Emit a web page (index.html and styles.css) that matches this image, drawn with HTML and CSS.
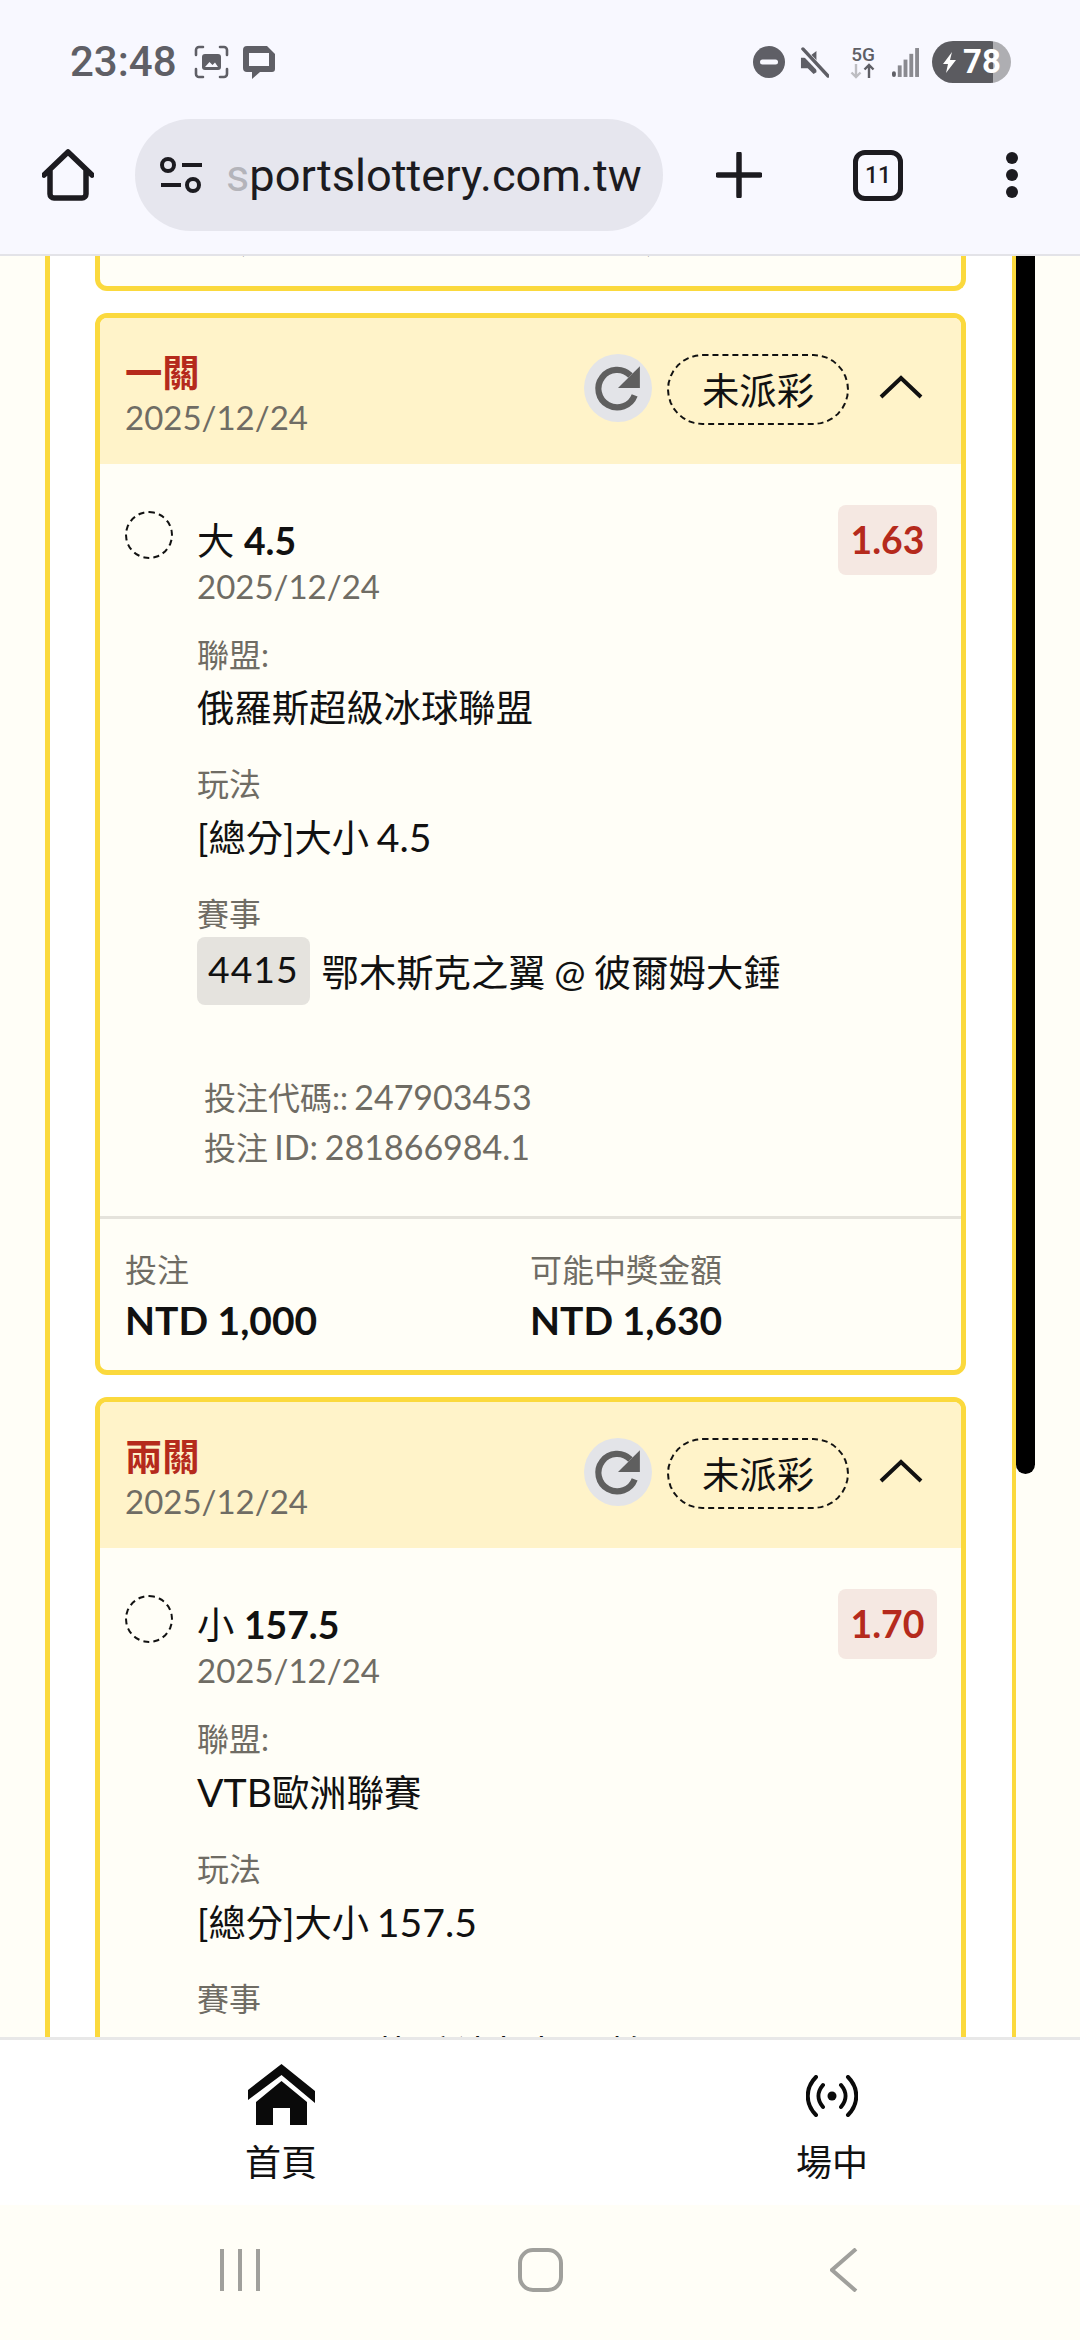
FILE: index.html
```html
<!DOCTYPE html>
<html>
<head>
    <meta charset="utf-8" />
    <meta name="viewport" content="width=device-width, initial-scale=1.0" />
    <title>sportslottery.com.tw</title>
    <link rel="stylesheet" href="styles.css">
</head>
<body>
    <header class="browser">
        <div class="status">
            <span class="time">23:48</span>
            <svg class="status-icon shot" viewBox="0 0 35 34"><path d="M2 10V5a3 3 0 0 1 3-3h4M26 2h4a3 3 0 0 1 3 3v5M33 24v5a3 3 0 0 1-3 3h-4M9 32H5a3 3 0 0 1-3-3v-5" fill="none" stroke="#5f5f66" stroke-width="2.6" stroke-linecap="round"/><rect x="8" y="9" width="19" height="16" rx="3" fill="#5f5f66"/><path d="M11 22l4.500-5 3 3 2.500-2.500 3 4.500z" fill="#f8f8ff"/></svg>
            <svg class="status-icon msg" viewBox="0 0 32 33"><path d="M4 0h20l8 8v15a3 3 0 0 1-3 3H17l-8 7v-7H4a4 4 0 0 1-4-4V4a4 4 0 0 1 4-4z" fill="#5f5f66"/><rect x="6" y="7" width="20" height="13" fill="#f8f8ff"/></svg>
            <div class="status-right">
                <svg class="status-icon dnd" viewBox="0 0 32 32"><circle cx="16" cy="16" r="16" fill="#5f5f66"/><rect x="7" y="13.500" width="18" height="5" rx="2.500" fill="#f8f8ff"/></svg>
                <svg class="status-icon mute" viewBox="0 0 30 32"><path d="M1 11h7l9-7v22l-3 2-6-6H1z" fill="#5f5f66"/><path d="M2 3l26 27" stroke="#f8f8ff" stroke-width="7"/><path d="M3 2l26 28" stroke="#5f5f66" stroke-width="3.500" stroke-linecap="round"/></svg>
                <div class="net">
                    <span class="net-label">5G</span>
                    <svg viewBox="0 0 26 16"><path d="M6 1v13M1.500 9.500L6 14l4.500-4.500" fill="none" stroke="#bdbdc2" stroke-width="2.400"/><path d="M19 15V2M14.500 6.500L19 2l4.500 4.500" fill="none" stroke="#5f5f66" stroke-width="2.400"/></svg>
                </div>
                <svg class="status-icon signal" viewBox="0 0 28 30"><rect x="0" y="24" width="4" height="6" rx="2" fill="#5f5f66"/><rect x="6" y="18" width="4" height="12" fill="#8a8a90"/><rect x="12" y="12" width="4" height="18" fill="#8a8a90"/><rect x="18" y="6" width="4" height="24" fill="#8a8a90"/><rect x="24" y="0" width="4" height="30" fill="#8a8a90"/></svg>
                <div class="battery">
                    <svg viewBox="0 0 15 21"><path d="M10 0L1 12h5l-2 9 10-13H8z" fill="#fff"/></svg>
                    <span>78</span>
                </div>
            </div>
        </div>
        <div class="toolbar">
            <svg class="home-icon" viewBox="0 0 52 52"><path d="M2 26L26 3l24 23M8 21v24a4 4 0 0 0 4 4h28a4 4 0 0 0 4-4V21" fill="none" stroke="#1c1b20" stroke-width="5.500" stroke-linecap="round" stroke-linejoin="round"/></svg>
            <div class="url-pill">
                <svg class="tune-icon" viewBox="0 0 42 36"><circle cx="8" cy="8" r="6" fill="none" stroke="#1c1b20" stroke-width="4"/><path d="M22 8h20M1 28h20" stroke="#1c1b20" stroke-width="4"/><circle cx="33" cy="28" r="6" fill="none" stroke="#1c1b20" stroke-width="4"/></svg>
                <span class="url"><span class="url-fade">s</span>portslottery.com.tw</span>
            </div>
            <svg class="plus-icon" viewBox="0 0 46 46"><path d="M23 2v42M2 23h42" stroke="#1c1b20" stroke-width="5.500" stroke-linecap="round"/></svg>
            <div class="tabs">11</div>
            <svg class="more-icon" viewBox="0 0 12 46"><circle cx="6" cy="6" r="6" fill="#1c1b20"/><circle cx="6" cy="23" r="6" fill="#1c1b20"/><circle cx="6" cy="40" r="6" fill="#1c1b20"/></svg>
        </div>
    </header>

    <main class="content">
        <div class="frame">
            <div class="card card-stub">
                <div class="foot foot-clipped">
                    <div class="foot-col"><div class="amount">NTD 1,000</div></div>
                    <div class="foot-col"><div class="amount">NTD 1,630</div></div>
                </div>
            </div>

            <div class="card">
                <div class="card-head">
                    <div class="head-text">
                        <div class="parlay">一關</div>
                        <div class="date">2025/12/24</div>
                    </div>
                    <div class="refresh">
                        <svg viewBox="0 0 48 48"><path d="M40 31a18 18 0 1 1-4-19" fill="none" stroke="#5f5f5f" stroke-width="6"/><path d="M45 3v21H24z" fill="#5f5f5f"/></svg>
                    </div>
                    <div class="state">未派彩</div>
                    <svg class="chevron" viewBox="0 0 44 24"><path d="M2 22L22 3l20 19" fill="none" stroke="#111" stroke-width="4"/></svg>
                </div>
                <div class="selection">
                    <div class="radio"></div>
                    <div class="selection-main">
                        <div class="pick">大 <b>4.5</b></div>
                        <div class="date pick-date">2025/12/24</div>
                        <div class="label first">聯盟:</div>
                        <div class="value">俄羅斯超級冰球聯盟</div>
                        <div class="label">玩法</div>
                        <div class="value">[總分]大小 <span class="num">4.5</span></div>
                        <div class="label">賽事</div>
                        <div class="match">
                            <span class="chip">4415</span>
                            <span class="teams">鄂木斯克之翼 @ 彼爾姆大錘</span>
                        </div>
                        <div class="info">
                            <div>投注代碼:: <span class="num">247903453</span></div>
                            <div>投注 <span class="num">ID: 281866984.1</span></div>
                        </div>
                    </div>
                    <div class="odds">1.63</div>
                </div>
                <div class="foot">
                    <div class="foot-col">
                        <div class="label">投注</div>
                        <div class="amount">NTD 1,000</div>
                    </div>
                    <div class="foot-col">
                        <div class="label">可能中獎金額</div>
                        <div class="amount">NTD 1,630</div>
                    </div>
                </div>
            </div>

            <div class="card">
                <div class="card-head">
                    <div class="head-text">
                        <div class="parlay">兩關</div>
                        <div class="date">2025/12/24</div>
                    </div>
                    <div class="refresh">
                        <svg viewBox="0 0 48 48"><path d="M40 31a18 18 0 1 1-4-19" fill="none" stroke="#5f5f5f" stroke-width="6"/><path d="M45 3v21H24z" fill="#5f5f5f"/></svg>
                    </div>
                    <div class="state">未派彩</div>
                    <svg class="chevron" viewBox="0 0 44 24"><path d="M2 22L22 3l20 19" fill="none" stroke="#111" stroke-width="4"/></svg>
                </div>
                <div class="selection">
                    <div class="radio"></div>
                    <div class="selection-main">
                        <div class="pick">小 <b>157.5</b></div>
                        <div class="date pick-date">2025/12/24</div>
                        <div class="label first">聯盟:</div>
                        <div class="value"><span class="num">VTB</span>歐洲聯賽</div>
                        <div class="label">玩法</div>
                        <div class="value">[總分]大小 <span class="num">157.5</span></div>
                        <div class="label">賽事</div>
                        <div class="match match-nochip">莫斯科中央 @ 帕爾馬</div>
                    </div>
                    <div class="odds">1.70</div>
                </div>
            </div>
        </div>
        <div class="scrollbar"></div>
    </main>

    <nav class="tabbar">
        <div class="tab-item">
            <svg class="tab-home" viewBox="0 0 67 61"><path d="M33.500 0L67 27v12L33.500 11 0 36V26z" fill="#0a0a0a"/><path d="M33.500 17L59 38v23H42V44H25v17H8V38z" fill="#0a0a0a"/></svg>
            <span>首頁</span>
        </div>
        <div class="tab-item">
            <svg class="tab-live" viewBox="0 0 52 42"><path d="M10 2C-1 13-1 29 10 40M42 2c11 11 11 27 0 38M17 10c-6 7-6 15 0 22M35 10c6 7 6 15 0 22" fill="none" stroke="#0a0a0a" stroke-width="4" stroke-linecap="round"/><circle cx="26" cy="21" r="4.500" fill="#0a0a0a"/></svg>
            <span>場中</span>
        </div>
    </nav>

    <div class="system-nav">
        <div class="sys-recent"><i></i><i></i><i></i></div>
        <div class="sys-home"></div>
        <svg class="sys-back" viewBox="0 0 28 44"><path d="M26 1L2 22l24 21" fill="none" stroke="#a0a09c" stroke-width="4"/></svg>
    </div>
</body>
</html>
```

FILE: styles.css
```css
* {
    box-sizing: border-box;
}
html, body {
    margin: 0;
    padding: 0;
}
body {
    width: 1080px;
    height: 2340px;
    display: flex;
    flex-direction: column;
    overflow: hidden;
    background: #fffef7;
    color: #111;
    font-family: Lato, "Noto Sans CJK TC", sans-serif;
    font-size: 37.33px;
}
.num {
    font-size: 1.05em;
}

/* browser chrome */
.browser {
    flex: none;
    height: 256px;
    background: #f8f8ff;
    border-bottom: 2px solid #e3e3e8;
}
.status {
    height: 119px;
    padding: 41px 0 0 70px;
    display: flex;
    align-items: flex-start;
}
.time {
    width: 124px;
    height: 42px;
    line-height: 42px;
    font-family: Roboto, sans-serif;
    font-weight: 500;
    font-size: 42px;
    color: #5f5f66;
}
.status-icon {
    display: block;
    flex: none;
}
.shot {
    width: 35px;
    height: 34px;
    margin-top: 4px;
}
.msg {
    width: 32px;
    height: 33px;
    margin: 5px 0 0 14px;
}
.status-right {
    margin-left: auto;
    width: 327px;
    display: flex;
    align-items: center;
    height: 42px;
}
.dnd {
    width: 32px;
    height: 32px;
}
.mute {
    width: 29px;
    height: 31px;
    margin-left: 15px;
}
.net {
    width: 26px;
    margin-left: 21px;
    color: #5f5f66;
}
.net-label {
    display: block;
    font-family: Roboto, sans-serif;
    font-weight: 500;
    font-size: 19px;
    line-height: 17px;
    text-align: center;
}
.net svg {
    display: block;
    width: 26px;
    height: 16px;
}
.signal {
    width: 27px;
    height: 29px;
    margin-left: 16px;
}
.battery {
    width: 79px;
    height: 42px;
    margin-left: 13px;
    border-radius: 21px;
    background: linear-gradient(90deg, #5b5b60 77%, #aeaeb2 77%);
    color: #fff;
    display: flex;
    align-items: center;
    padding-left: 10px;
    gap: 6px;
}
.battery svg {
    width: 15px;
    height: 21px;
    flex: none;
}
.battery span {
    font-family: Roboto, sans-serif;
    font-weight: 700;
    font-size: 33px;
    line-height: 42px;
}
.toolbar {
    height: 112px;
    display: flex;
    align-items: center;
    padding-left: 42px;
}
.home-icon {
    width: 52px;
    height: 52px;
    flex: none;
}
.url-pill {
    width: 528px;
    height: 112px;
    margin-left: 41px;
    border-radius: 56px;
    background: #e6e6ee;
    display: flex;
    align-items: center;
    padding-left: 25px;
}
.tune-icon {
    width: 42px;
    height: 36px;
    flex: none;
}
.url {
    margin-left: 24px;
    font-family: Roboto, sans-serif;
    font-size: 45.2px;
    color: #1c1b20;
}
.url-fade {
    color: #b4b4ba;
}
.plus-icon {
    width: 46px;
    height: 46px;
    margin-left: 53px;
    flex: none;
}
.tabs {
    width: 50px;
    height: 51px;
    margin-left: 91px;
    border: 5px solid #1c1b20;
    border-radius: 12px;
    font-family: Roboto, sans-serif;
    font-weight: 500;
    font-size: 23px;
    line-height: 41px;
    text-align: center;
    color: #1c1b20;
}
.more-icon {
    width: 12px;
    height: 46px;
    margin-left: 103px;
    flex: none;
}

/* page content, scrolled */
.content {
    flex: 1;
    min-height: 0;
    position: relative;
    overflow: hidden;
}
.frame {
    width: 971px;
    margin-left: 45px;
    padding: 0 46px 0 45px;
    background: #fff;
    border-left: 5px solid #fbd93d;
    border-right: 4px solid #fbd93d;
}
.scrollbar {
    position: absolute;
    top: 0;
    left: 1016px;
    width: 19px;
    height: 1218px;
    background: #000;
    border-radius: 0 0 10px 10px;
}
.card {
    border: 5px solid #fbd93d;
    border-radius: 12px;
    background: #fffef7;
    margin-bottom: 22px;
    overflow: hidden;
}
.card-stub {
    height: 35px;
    border-top: 0;
    border-radius: 0 0 12px 12px;
}
.card-head {
    height: 146px;
    background: #fff3c9;
    display: flex;
    align-items: flex-start;
    padding: 36px 0 0 25px;
}
.head-text {
    flex: 1;
}
.parlay {
    font-weight: 700;
    font-size: 37.33px;
    line-height: 38px;
    margin-bottom: 4px;
    color: #b52a1c;
}
.date {
    font-size: 33px;
    line-height: 42px;
    color: #6f6c64;
}
.refresh {
    width: 68px;
    height: 68px;
    border-radius: 50%;
    background: #e3e4e8;
    display: flex;
    align-items: center;
    justify-content: center;
}
.refresh svg {
    width: 50px;
    height: 50px;
}
.state {
    width: 182px;
    height: 71px;
    margin-left: 15px;
    border: 2.67px dashed #111;
    border-radius: 36px;
    text-align: center;
    line-height: 70px;
}
.chevron {
    width: 44px;
    height: 24px;
    margin: 21px 38px 0 30px;
}
.selection {
    display: flex;
    align-items: flex-start;
    padding: 41px 24px 0 25px;
}
.radio {
    flex: none;
    width: 48px;
    height: 48px;
    margin: 6px 24px 0 0;
    border: 2.5px dashed #111;
    border-radius: 50%;
}
.selection-main {
    flex: 1;
    padding-top: 11px;
}
.pick {
    line-height: 50px;
}
.pick b {
    font-weight: 700;
}
.pick-date {
    margin-top: -1px;
}
.label {
    font-size: 32px;
    line-height: 40px;
    color: #6f6c64;
    margin-top: 31px;
}
.label.first {
    margin-top: 28px;
}
.value {
    line-height: 50px;
    margin-top: 8px;
    word-spacing: -2px;
}
.match {
    margin-top: 3px;
    display: flex;
    align-items: center;
    gap: 12px;
}
.match-nochip {
    margin: 10px 0 0 176px;
    line-height: 50px;
    word-spacing: -1px;
}
.teams {
    word-spacing: -1px;
}
.chip {
    height: 68px;
    line-height: 64px;
    padding: 0 11px;
    border-radius: 8px;
    background: #e5e3de;
    letter-spacing: 1px;
}
.info {
    margin: 67px 0 44px 7px;
    font-size: 32px;
    line-height: 49px;
    color: #6f6c64;
    word-spacing: -2px;
}
.info .num {
    font-size: 34px;
}
.odds {
    flex: none;
    width: 99px;
    height: 70px;
    border-radius: 8px;
    background: #f5e8e2;
    color: #b52a1c;
    font-weight: 700;
    font-size: 37.33px;
    line-height: 70px;
    text-align: center;
}
.foot {
    display: flex;
    border-top: 3px solid #e5e3dc;
    padding: 31px 0 25px 25px;
}
.foot-clipped {
    border-top: 0;
    padding-top: 0;
    margin-top: -45px;
}
.foot-col {
    width: 405px;
}
.foot-col .label {
    margin-top: 0;
}
.amount {
    font-weight: 700;
    font-size: 39px;
    line-height: 50px;
    margin-top: 5px;
}
.foot-clipped .amount {
    margin-top: 0;
}

/* bottom tabs */
.tabbar {
    flex: none;
    height: 168px;
    background: #fff;
    border-top: 3px solid #e8e8e8;
    display: flex;
    padding-left: 181px;
    gap: 351px;
}
.tab-item {
    width: 200px;
    height: 165px;
    display: flex;
    flex-direction: column;
    align-items: center;
}
.tab-item span {
    margin-top: auto;
    margin-bottom: 20px;
    font-size: 36px;
    line-height: 46px;
}
.tab-home {
    width: 67px;
    height: 61px;
    margin-top: 24px;
}
.tab-live {
    width: 52px;
    height: 42px;
    margin-top: 35px;
}

/* android nav */
.system-nav {
    flex: none;
    height: 135px;
    display: flex;
    align-items: center;
    padding: 0 0 5px 220px;
}
.sys-recent {
    width: 40px;
    height: 42px;
    display: flex;
    justify-content: space-between;
}
.sys-recent i {
    width: 4px;
    background: #a0a09c;
}
.sys-home {
    width: 45px;
    height: 44px;
    margin-left: 258px;
    border: 4px solid #a0a09c;
    border-radius: 15px;
}
.sys-back {
    width: 28px;
    height: 44px;
    margin-left: 267px;
}
```
